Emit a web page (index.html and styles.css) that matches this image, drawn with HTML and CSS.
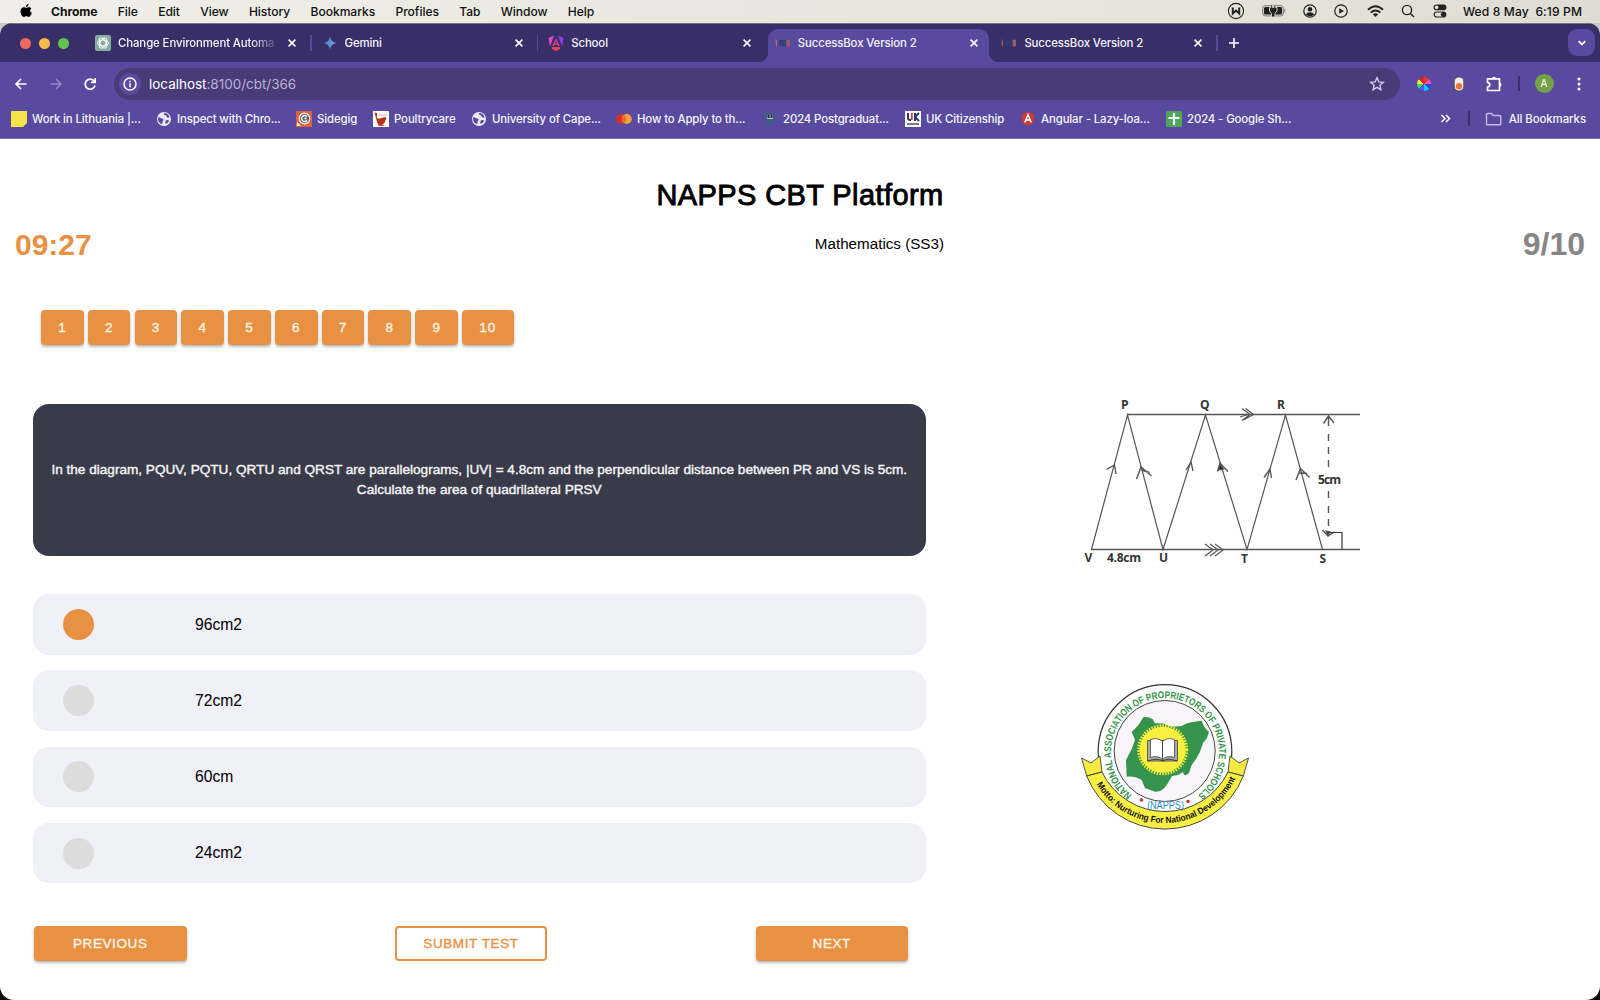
FILE: index.html
```html
<!DOCTYPE html>
<html lang="en">
<head>
<meta charset="utf-8">
<title>SuccessBox Version 2</title>
<link rel="stylesheet" href="styles.css">
</head>
<body>
<svg class="defs" width="0" height="0" aria-hidden="true">
  <symbol id="x" viewBox="0 0 10 10"><path d="M1.6 1.6l6.8 6.8M8.4 1.6L1.6 8.4" stroke="#fff" stroke-width="1.6"/></symbol>
  <symbol id="globe" viewBox="0 0 16 16"><circle cx="8" cy="8" r="7" fill="#ece9f7"/><path d="M2.3 6.200C4 6 4.600 7.200 6 7.400 7.800 7.600 8 8.900 7 10c-.8.900-.3 2-1 3.200C4 12.600 1.800 10.500 2 8zM8 2c-.6 1.400.4 2 1.600 2.300C11 4.600 10.200 6 11.300 6.500c1 .4 1.700-.2 2.300.3C13 4 11 2 8 2zM10 9.500c1-.8 2.500-.5 3.200.3-.6 1.600-2 2.800-3.500 3.300-.2-1.400-.9-2.400.3-3.600z" fill="#5a4a9f"/></symbol>
  <symbol id="box" viewBox="0 0 16 16"><rect x="4" y="5" width="7" height="6" fill="#35407f"/><path d="M.8 3.500Q3 8 1.300 12.500Q.3 8 .8 3.500z" fill="#c77a5c"/><rect x="11.500" y="4.500" width="3.500" height="7" rx="1.500" fill="#96605f"/></symbol>
  <symbol id="boxdark" viewBox="0 0 16 16"><rect x="5" y="5.500" width="5" height="5" fill="#2c3a78"/><path d="M.8 3.500Q3 8 1.300 12.500Q.3 8 .8 3.500z" fill="#a8624f"/><rect x="11.500" y="4.500" width="3.500" height="7" rx="1.500" fill="#96605f"/></symbol>
</svg>
<div class="desktop">
  <header class="menubar">
    <svg class="apple" width="14" height="16" viewBox="0 0 14 16"><path d="M9.600 1c.1 1.500-1.200 2.900-2.600 2.900C6.800 2.500 8.200 1.100 9.600 1zM12.300 5.600c-1.700 1.100-1.500 3.700.5 4.500-.5 1.600-1.700 3.800-3 3.800-.9 0-1.300-.6-2.400-.6s-1.600.6-2.400.6C3.300 13.900 1.500 11 1.500 8.400c0-2.700 1.700-4.100 3.300-4.100 1 0 1.900.7 2.500.7s1.600-.8 2.900-.7c.8 0 1.600.5 2.100 1.300z"/></svg>
    <nav class="menus"><b>Chrome</b><span>File</span><span>Edit</span><span>View</span><span>History</span><span>Bookmarks</span><span>Profiles</span><span>Tab</span><span>Window</span><span>Help</span></nav>
    <div class="status">
      <svg width="18" height="18" viewBox="0 0 18 18" fill="none" stroke="#222"><circle cx="9" cy="9" r="7.600" stroke-width="1.100"/><path d="M5.800 5.500v6L9 8.500l3.200 3v-6" stroke-width="2"/></svg>
      <svg width="24" height="14" viewBox="0 0 24 14"><rect x=".5" y="1.500" width="21" height="10.500" rx="3" fill="#c8c7c0" stroke="#888780"/><rect x="2" y="3" width="18" height="7.500" rx="1.500" fill="#222"/><path d="M8.800.5h1.700v3h1.500v-3h1.700v3H15V7l-2 2.500V13H9.500V9.500L7.500 7V3.500h1.300z" fill="#222" stroke="#dddbd2" stroke-width=".9"/><path d="M22.800 5v3.500" stroke="#777"/></svg>
      <svg width="14" height="14" viewBox="0 0 14 14"><circle cx="7" cy="7" r="6.200" fill="none" stroke="#222" stroke-width="1.200"/><circle cx="7" cy="5.300" r="2.300" fill="#222"/><path d="M2.800 10.500Q4 8.200 7 8.200t4.200 2.300Q9.500 12.300 7 12.300t-4.200-1.800z" fill="#222"/></svg>
      <svg width="14" height="14" viewBox="0 0 14 14"><circle cx="7" cy="7" r="6.200" fill="none" stroke="#222" stroke-width="1.200"/><path d="M5.200 4.200L10 7l-4.800 2.800z" fill="#222"/></svg>
      <svg width="17" height="13" viewBox="0 0 17 13" fill="none" stroke="#222" stroke-width="1.900"><path d="M1 4.800Q8.500-2.400 16 4.800M3.700 7.600Q8.500 3.200 13.300 7.600"/><path d="M5.800 9.300Q8.500 7.300 11.200 9.300L8.500 12z" fill="#222" stroke="none"/></svg>
      <svg width="14" height="14" viewBox="0 0 14 14" fill="none" stroke="#222" stroke-width="1.400"><circle cx="6" cy="6" r="4.600"/><path d="M9.400 9.400L13 13"/></svg>
      <svg width="14" height="14" viewBox="0 0 14 14"><rect x=".6" y=".6" width="12.800" height="5.600" rx="2.800" fill="#222"/><circle cx="3.600" cy="3.400" r="1.800" fill="#e6e4dc"/><rect x="1.200" y="8" width="11.600" height="5" rx="2.500" fill="none" stroke="#222" stroke-width="1.200"/><circle cx="10.200" cy="10.500" r="2.400" fill="#222"/></svg>
      <span class="clock">Wed 8 May&nbsp; 6:19 PM</span>
    </div>
  </header>

  <div class="window">
    <div class="tabstrip">
      <div class="lights"><i class="red"></i><i class="amber"></i><i class="green"></i></div>
      <div class="tab">
        <svg width="16" height="16" viewBox="0 0 16 16"><rect width="16" height="16" rx="2" fill="#84ac9f"/><g fill="none" stroke="#fff" stroke-width=".9"><ellipse cx="8" cy="8" rx="5.500" ry="2.900"/><ellipse cx="8" cy="8" rx="5.500" ry="2.900" transform="rotate(60 8 8)"/><ellipse cx="8" cy="8" rx="5.500" ry="2.900" transform="rotate(120 8 8)"/></g></svg>
        <span class="title fade">Change Environment Automa</span><svg class="close"><use href="#x"/></svg><i class="sep"></i>
      </div>
      <div class="tab">
        <svg width="16" height="16" viewBox="0 0 16 16"><defs><linearGradient id="gem"><stop stop-color="#3f7bd8"/><stop offset="1" stop-color="#78a8d8"/></linearGradient></defs><path d="M8 1.500Q8.800 7.200 14.500 8 8.800 8.800 8 14.500 7.200 8.800 1.500 8 7.200 7.200 8 1.500z" fill="url(#gem)"/></svg>
        <span class="title">Gemini</span><svg class="close"><use href="#x"/></svg><i class="sep"></i>
      </div>
      <div class="tab">
        <svg width="16" height="16" viewBox="0 0 16 16"><path d="M.5 3L6 .5 2 11.500z" fill="#e34ac2"/><path d="M15.500 3L10 .5l4 11z" fill="#8a3ff0"/><path d="M8 3l3.800 8h-2L9.300 9.700H6.700L6.200 11h-2zm0 3l-.9 2.400h1.800z" fill="#dc3d80"/><path d="M4.300 12h7.400l.6 1.700L8 16l-4.300-2.300z" fill="#e8435d"/></svg>
        <span class="title">School</span><svg class="close"><use href="#x"/></svg>
      </div>
      <div class="tab active"><svg width="16" height="16"><use href="#box"/></svg><span class="title">SuccessBox Version 2</span><svg class="close"><use href="#x"/></svg></div>
      <div class="tab"><svg width="16" height="16"><use href="#boxdark"/></svg><span class="title">SuccessBox Version 2</span><svg class="close"><use href="#x"/></svg><i class="sep"></i></div>
      <svg class="plus" width="12" height="12" viewBox="0 0 12 12"><path d="M6 1v10M1 6h10" stroke="#fff" stroke-width="1.600"/></svg>
      <div class="tabsearch"><svg width="10" height="8" viewBox="0 0 10 8"><path d="M1.700 2.200L5 5.500l3.300-3.300" fill="none" stroke="#fff" stroke-width="1.700"/></svg></div>
    </div>

    <div class="toolbar">
      <div class="navs">
        <svg width="14" height="14" viewBox="0 0 14 14" fill="none" stroke="#fff" stroke-width="1.600"><path d="M12.500 7H2.500M7 2L2 7l5 5"/></svg>
        <svg width="14" height="14" viewBox="0 0 14 14" fill="none" stroke="#9287c4" stroke-width="1.500"><path d="M1.500 7h10M7 2l5 5-5 5"/></svg>
        <svg width="14" height="14" viewBox="0 0 14 14" fill="none" stroke="#fff" stroke-width="1.700"><path d="M12 8.500A5 5 0 1 1 11 4L12.300 5"/><path d="M12.200 1v4.400H8"/></svg>
      </div>
      <div class="omnibox">
        <span class="info"><svg width="14" height="14" viewBox="0 0 14 14"><circle cx="7" cy="7" r="6" fill="none" stroke="#fff" stroke-width="1.500"/><path d="M7 6.200V10.300M7 3.700v1.500" stroke="#fff" stroke-width="1.500"/></svg></span>
        <span class="url">localhost<em>:8100/cbt/366</em></span>
        <svg class="star" width="16" height="16" viewBox="0 0 16 16"><path d="M8 1.800l1.800 4.100 4.500.4-3.400 3 1 4.400L8 11.400l-3.900 2.300 1-4.400-3.400-3 4.500-.4z" fill="none" stroke="#d0cae6" stroke-width="1.400"/></svg>
      </div>
      <div class="exts">
        <span class="wheel"></span>
        <svg width="12" height="16" viewBox="0 0 12 16"><rect x="1.200" y="1" width="9.600" height="14" rx="4.500" fill="#f1efe9" stroke="#55504f"/><circle cx="6" cy="10.300" r="3.200" fill="#e2783c"/></svg>
        <svg width="16" height="18" viewBox="0 0 16 18"><path d="M13.500 15.500h-12V12q2.300-.4 2.300-2.300T1.500 7.500V3.800h12z" fill="none" stroke="#fff" stroke-width="1.700" stroke-linejoin="round"/><path d="M6 3.800a2 2 0 0 1 4 0zM13.500 7.700a2 2 0 0 1 0 4z" fill="#fff"/></svg>
        <i class="rule"></i>
        <span class="avatar">A</span>
        <svg width="4" height="16" viewBox="0 0 4 16" fill="#fff"><circle cx="2" cy="3" r="1.500"/><circle cx="2" cy="8" r="1.500"/><circle cx="2" cy="13" r="1.500"/></svg>
      </div>
    </div>

    <div class="bookmarks">
      <a style="width:145px"><svg viewBox="0 0 16 16"><path d="M0 0h16v12l-4 4H0z" fill="#f5e34a"/></svg>Work in Lithuania |...</a>
      <a style="width:140px"><svg viewBox="0 0 16 16"><use href="#globe"/></svg>Inspect with Chro...</a>
      <a style="width:77px"><svg viewBox="0 0 16 16"><rect width="16" height="16" fill="#d9633a"/><circle cx="8.500" cy="7.500" r="5.300" fill="#666" stroke="#eee" stroke-width="1.300"/><path d="M11 5.500A3 3 0 1 0 11 9.500M8.500 7.500h2" fill="none" stroke="#fff" stroke-width="1.300"/><path d="M1 11l4 4H1z" fill="#fff"/></svg>Sidegig</a>
      <a style="width:98px"><svg viewBox="0 0 16 16"><rect width="16" height="16" fill="#fff"/><path d="M1.500 1.500l2.500.5v5.500h3l5-1.500 1.500 1-2 5-3 2.500H5.500L4 11z" fill="#b5351d"/><path d="M5.500 14.500h6" stroke="#c55a3b"/><path d="M6 4h8" stroke="#dfa896"/></svg>Poultrycare</a>
      <a style="width:145px"><svg viewBox="0 0 16 16"><use href="#globe"/></svg>University of Cape...</a>
      <a style="width:146px"><svg viewBox="0 0 16 16"><circle cx="5.200" cy="8" r="5" fill="#d6312c"/><circle cx="10.800" cy="8" r="5" fill="#f0a03a"/><path d="M8 3.900a5 5 0 0 1 0 8.200 5 5 0 0 1 0-8.200z" fill="#ee6a2c"/></svg>How to Apply to th...</a>
      <a style="width:143px"><svg viewBox="0 0 16 16"><path d="M3 2h10v6q0 4-5 6-5-2-5-6z" fill="#405d86"/><path d="M5 4h6v4H5z" fill="#b8c4bd"/><path d="M5.500 4h2v3h-2zM8.500 4h2v3h-2z" fill="#202b38"/></svg>2024 Postgraduat...</a>
      <a style="width:115px"><svg viewBox="0 0 16 16"><rect width="16" height="16" fill="#fff"/><path d="M3 2v5q0 2 2 2h1M10 2v8M14 2l-4 4 4 4" stroke="#25376d" stroke-width="2" fill="none"/><path d="M6.800 2v7" stroke="#d43a42" stroke-width="1.800"/><path d="M2 13h12" stroke="#44507c" stroke-width="1.500"/></svg>UK Citizenship</a>
      <a style="width:146px"><svg viewBox="0 0 16 16"><path d="M8 1l6.500 2.300-1 8.700L8 15l-5.500-3-1-8.700z" fill="#cb3b35"/><path d="M4.800 11.500L8 3.700l3.200 7.800M6 9h4" fill="none" stroke="#fff" stroke-width="1.500"/></svg>Angular - Lazy-loa...</a>
      <a><svg viewBox="0 0 16 16"><rect width="16" height="16" rx="1.500" fill="#4fa65a"/><path d="M8 2v12M2.500 7h11" stroke="#fff" stroke-width="2.200"/></svg>2024 - Google Sh...</a>
      <div class="more">
        <svg width="11" height="9" viewBox="0 0 11 9"><path d="M1.500 1L5 4.500 1.500 8M6 1l3.500 3.500L6 8" fill="none" stroke="#fff" stroke-width="1.500"/></svg>
        <i class="rule"></i>
        <svg width="17" height="14" viewBox="0 0 17 14"><path d="M1.500 12V2.500q0-1 1-1H6.500l1.700 2h6.500q1 0 1 1V12q0 .8-1 .8H2.500q-1 0-1-.8z" fill="none" stroke="#c3bbdd" stroke-width="1.400"/></svg>
        <span>All Bookmarks</span>
      </div>
    </div>

    <main class="page">
      <h1>NAPPS CBT Platform</h1>
      <div class="infobar"><strong class="timer">09:27</strong><span class="subject">Mathematics (SS3)</span><strong class="count">9/10</strong></div>
      <div class="numbers"><button>1</button><button>2</button><button>3</button><button>4</button><button>5</button><button>6</button><button>7</button><button>8</button><button>9</button><button class="wide">10</button></div>
      <div class="columns">
        <section class="quiz">
          <div class="question"><p>In the diagram, PQUV, PQTU, QRTU and QRST are parallelograms, |UV| = 4.8cm and the perpendicular distance between PR and VS is 5cm.</p><p>Calculate the area of quadrilateral PRSV</p></div>
          <div class="option"><i class="on"></i>96cm2</div>
          <div class="option"><i></i>72cm2</div>
          <div class="option"><i></i>60cm</div>
          <div class="option"><i></i>24cm2</div>
          <div class="actions"><button>PREVIOUS</button><button class="outline">SUBMIT TEST</button><button>NEXT</button></div>
        </section>
        <aside class="side">
          <svg class="diagram" width="310" height="180" viewBox="0 0 310 180">
            <g fill="none" stroke="#555" stroke-width="1.200">
              <path d="M57 24.500H290M21 159.500H290" stroke-width="1.500"/>
              <path d="M21.500 159.500L57.500 25 93 159.500 135.500 25 177 159.500 215.500 25 252.500 159.500"/>
              <path d="M36.500 79.500l8-4.500 1.500 9M66.500 89l4.500-12 10.500 9M71.500 80l8 2.500M116 80l5-8 2 9M147.500 81.500l2.500-8.500 8 8.500M194 87.500l6-8.500 1.500 9M226 90l4.500-11.500 9 9M229 83l8 .5" stroke-width="1.400"/>
              <path d="M172 18.500l8 6-8 6M175.500 18.500l8 6-10 5.500M170 27l8-2.500" stroke-width="1.300"/>
              <path d="M135 154l8 6-8 6M140 154l8 6-8 6M145 154l8 6-8 6"/>
              <path d="M258.500 27v9M258.500 44v7M258.500 57v7M258.500 70v7M258.500 101v7M258.500 116v7M258.500 129v7M253.500 33.500l5-7.500 5.500 7M252.500 140l5.500 6 6-4" stroke-width="1.400"/>
              <path d="M257 142.500h15V159" stroke="#333"/>
              <path d="M148.500 80l1.500-6 3.500 5zM256 141l4 1-2 3z" fill="#222"/>
            </g>
            <g class="labels"><text x="51" y="19">P</text><text x="130" y="19">Q</text><text x="207" y="19">R</text><text x="248" y="94" textLength="23">5cm</text><text x="14.500" y="172">V</text><text x="37" y="172" textLength="34">4.8cm</text><text x="89" y="172">U</text><text x="171" y="173">T</text><text x="249.500" y="173">S</text></g>
          </svg>
          <svg class="logo" width="190" height="160" viewBox="0 0 190 160">
            <defs><path id="ringtext" d="M62 120A54 54 0 1 1 128 120"/><path id="motto" d="M25.500 107.500A79 79 0 0 0 165.500 103.500"/></defs>
            <circle cx="95" cy="76.500" r="66.800" fill="#fff" stroke="#333" stroke-width="1.200"/>
            <circle cx="94.700" cy="76" r="50.500" fill="#f8f5f8" stroke="#444" stroke-width="1"/>
            <path d="M73.300 42.300Q78 41.500 82.700 44.300L85 48.300 93 48.500 101.700 51.700 111.700 51Q118 47 125 46.700L129 46 131.700 45.700Q134 53 139 56.700L137 63 133 68 130 76.700 126 84 121.700 90 119 98Q114 103 113 97L108 100 102 101 98 108Q93 117 85 116.700L75 113 71.700 105Q65 101 56.700 101.700L56 85 61.700 74 65 65 61.700 56.700Q68 52 73.300 42.300z" fill="#36934b"/>
            <circle cx="92.700" cy="74.800" r="24" fill="none" stroke="#f5eb3e" stroke-width="3" stroke-dasharray="1.600 1.200"/><circle cx="92.700" cy="74.800" r="23" fill="#f9f03e"/>
            <path d="M77.500 65.500h30V86h-30z" fill="#aaa" stroke="#444" stroke-width=".8"/><path d="M92.500 66.500Q88 62 80.500 64.500V82.500Q88 80 92.500 84.500 97 80 104.500 82.500V64.500Q97 62 92.500 66.500z" fill="#fff" stroke="#444" stroke-width=".8"/><path d="M92.500 66.500v19M78 86q9-3.500 14.500 0 5.500-3.500 14.500 0" stroke="#333" stroke-width=".9" fill="none"/>
            <path d="M11.500 83L21 88 30 81 32 97 16.700 101z" fill="#f6e93f" stroke="#555"/>
            <path d="M178.500 83L169 88 160 81 158 97 173.300 101z" fill="#f6e93f" stroke="#555"/>
            <path d="M16.700 101L32 97A70 70 0 0 0 158 97L173.300 101A84.300 84.300 0 0 1 16.700 101z" fill="#f9ef42" stroke="#444"/>
            <text class="ring"><textPath href="#ringtext" textLength="268" lengthAdjust="spacingAndGlyphs">NATIONAL ASSOCIATION OF PROPRIETORS OF PRIVATE SCHOOLS</textPath></text>
            <text class="motto"><textPath href="#motto" startOffset="2" textLength="170" lengthAdjust="spacingAndGlyphs">Motto: Nurturing For National Development</textPath></text>
            <text class="napps" x="77" y="133.500" textLength="37" lengthAdjust="spacingAndGlyphs">(NAPPS)</text><circle cx="71.500" cy="125" r="1.800" fill="#c9343b"/><circle cx="118" cy="126.500" r="1.800" fill="#c9343b"/>
          </svg>
        </aside>
      </div>
    </main>
  </div>
</div>
</body>
</html>
```
FILE: styles.css
```css
* { box-sizing: border-box; }
body { margin: 0; }
.defs { display: block; }
.desktop { width: 1600px; height: 1000px; overflow: hidden; background: linear-gradient(#c9c7c0 60px, #0b0b0b 60px); display: flex; flex-direction: column; font-family: Inter, "Liberation Sans", sans-serif; }
svg { flex: none; }

.menubar { height: 23px; flex: none; display: flex; align-items: center; padding: 0 18px 1px 19px; background: linear-gradient(90deg, #efeee8, #e5e3da 75%, #dedcd3); color: #111; font-size: 12.100px; letter-spacing: -.05px; }
.menus { display: flex; gap: 20.300px; margin-left: 18px; }
.menus b { font-weight: 700; }
.menus span { font-weight: 500; }
.status { margin-left: auto; display: flex; align-items: center; }
.status svg:nth-child(1) { margin-right: 17px; }
.status svg:nth-child(2) { margin-right: 17px; }
.status svg:nth-child(3) { margin-right: 17px; }
.status svg:nth-child(4) { margin-right: 19px; }
.status svg:nth-child(5) { margin-right: 17px; }
.status svg:nth-child(6) { margin-right: 18px; }
.clock { margin-left: 16px; width: 119px; font-weight: 500; white-space: nowrap; text-align: right; letter-spacing: .1px; }

.window { flex: 1; min-height: 0; display: flex; flex-direction: column; background: #fff; border-radius: 12px 12px 14px 14px; overflow: hidden; }

.tabstrip { height: 39px; flex: none; display: flex; background: #392f68; border-top: 1px solid #77727f; padding-right: 5px; color: #f4f2fb; font-size: 11.400px; font-weight: 500; letter-spacing: -.12px; }
.lights { width: 85px; flex: none; padding: 14px 0 0 20px; display: flex; gap: 8px; }
.lights i { width: 11px; height: 11px; border-radius: 50%; }
.red { background: #ee6a5f; }
.amber { background: #f5bd4f; }
.green { background: #61c454; }
.tab { width: 226.600px; flex: none; height: 33px; margin-top: 5px; display: flex; align-items: center; padding: 0 0 6px 10px; position: relative; }
.title { width: 160px; margin-left: 7px; white-space: nowrap; overflow: hidden; }
.fade { letter-spacing: -.1px; -webkit-mask: linear-gradient(90deg, #000 84%, transparent 102%); mask: linear-gradient(90deg, #000 84%, transparent 102%); }
.close { width: 10px; height: 10px; margin-left: 11px; }
.sep { width: 1.500px; height: 16px; background: #5a4a9f; margin-left: 13px; }
.active::before { content: ""; position: absolute; inset: 0 2px 0 3px; background: #5a4a9f; border-radius: 10px 10px 0 0; }
.active::after { content: ""; position: absolute; left: -7px; right: -8px; bottom: 0; height: 10px; background: radial-gradient(circle at 0 0, transparent 10px, #5a4a9f 10.500px) left / 10px 10px no-repeat, radial-gradient(circle at 100% 0, transparent 10px, #5a4a9f 10.500px) right / 10px 10px no-repeat; }
.active > * { position: relative; z-index: 1; }
.plus { margin: 13px 0 0 10px; }
.tabsearch { margin: 5px 0 0 auto; width: 27px; height: 27px; border-radius: 9px; background: #5a4a9f; display: flex; align-items: center; justify-content: center; }

.toolbar { height: 43px; flex: none; display: flex; align-items: center; background: #5a4a9f; color: #fff; }
.navs { width: 114px; padding-left: 14px; display: flex; gap: 20.500px; }
.omnibox { width: 1286px; height: 32px; border-radius: 16px; background: #483b78; display: flex; align-items: center; padding: 0 15px 0 5px; }
.info { width: 22px; height: 22px; border-radius: 50%; background: #5a4a9f; display: flex; align-items: center; justify-content: center; }
.url { margin-left: 8px; font-size: 13.500px; letter-spacing: -.02px; }
.url em { font-style: normal; color: #b9b2d6; }
.star { margin-left: auto; }
.exts { flex: 1; display: flex; align-items: center; padding-left: 17px; }
.wheel { width: 14px; height: 14px; border-radius: 50%; background: conic-gradient(#e33 45deg, #f5a 0 90deg, #24e 0 135deg, #05c8ff 0 180deg, #55e 0 225deg, #3d5 0 270deg, #ee4 0 315deg, #d22 0); margin-right: 22px; }
.exts svg:nth-of-type(2) { margin-left: 21px; }
.rule { width: 1.500px; height: 15px; background: #3b3068; }
.exts .rule { margin: 0 15px 0 16px; }
.avatar { width: 19px; height: 19px; border-radius: 50%; background: #74a047; font-size: 10px; line-height: 19px; text-align: center; margin-right: 23px; }

.bookmarks { height: 34px; flex: none; display: flex; align-items: center; padding: 0 14px 6px 11px; background: #5a4a9f; color: #f6f4fc; font-size: 11.400px; font-weight: 500; letter-spacing: -.12px; border-bottom: 1px solid #81769f; }
.bookmarks a { display: flex; align-items: center; gap: 5px; flex: none; white-space: nowrap; }
.bookmarks a svg { width: 16px; height: 16px; }
.more { margin-left: auto; display: flex; align-items: center; white-space: nowrap; letter-spacing: -.06px; }
.more .rule { margin: 0 15px 0 17px; }
.more span { margin-left: 7px; }

.page { flex: 1; font-family: "Liberation Sans", Arial, sans-serif; color: #000; }
h1 { margin: 37.300px 0 0; text-align: center; font-size: 29px; line-height: 38px; font-weight: 400; -webkit-text-stroke: .9px #000; letter-spacing: .4px; }
.infobar { display: grid; grid-template-columns: 1fr 288px 1fr; align-items: center; height: 38px; padding: 0 15px; margin-top: 11px; }
.timer { font-size: 30px; color: #e89143; padding-top: 1px; }
.subject { font-size: 15.200px; text-align: right; padding-bottom: 2px; }
.count { font-size: 32px; color: #868686; text-align: right; }
.numbers { display: flex; gap: 4.100px; padding: 47px 0 0 41px; }
button { height: 35px; border: 0; border-radius: 4px; background: #e89143; color: #fff5e8; font: 400 13.500px "Liberation Sans", sans-serif; letter-spacing: .9px; -webkit-text-stroke: .35px currentColor; box-shadow: 0 2px 3px rgba(0,0,0,.28); padding: 0; }
.numbers button { width: 42.700px; }
.numbers .wide { width: 51.500px; }
.columns { display: flex; padding: 58.500px 0 0 32.500px; }
.quiz { width: 893.500px; }
.question { height: 152.500px; border-radius: 16px; background: #3a3b4a; color: #f4f4f6; display: flex; flex-direction: column; justify-content: center; text-align: center; font-size: 13.600px; line-height: 20px; -webkit-text-stroke: .4px currentColor; margin-bottom: 38px; }
.question p { margin: 0; white-space: nowrap; }
.option { height: 60.500px; border-radius: 16px; background: #f0f0f9; margin-bottom: 15.700px; display: flex; align-items: center; padding-left: 30.500px; font-size: 15.700px; }
.option i { width: 31px; height: 31px; border-radius: 50%; background: #dcdcdc; margin-right: 101px; }
.option .on { background: #e89143; }
.actions { display: flex; justify-content: space-between; padding: 26.500px 18px 0 1.500px; }
.actions button { width: 152.500px; letter-spacing: .6px; }
.actions .outline { background: #fff; border: 2px solid #e89143; color: #e89143; box-shadow: none; }
.side { margin-left: 144px; display: flex; flex-direction: column; align-items: flex-start; gap: 105px; margin-top: -13.500px; }
.labels { font: bold 12px "Open Sans", "Noto Sans", sans-serif; fill: #333; }
.ring { font: bold 10px "Liberation Sans", sans-serif; fill: #36934b; }
.motto { font: bold 9px "Liberation Sans", sans-serif; fill: #111; }
.napps { font: 11px "Liberation Sans", sans-serif; fill: #2b8fcd; }
```
